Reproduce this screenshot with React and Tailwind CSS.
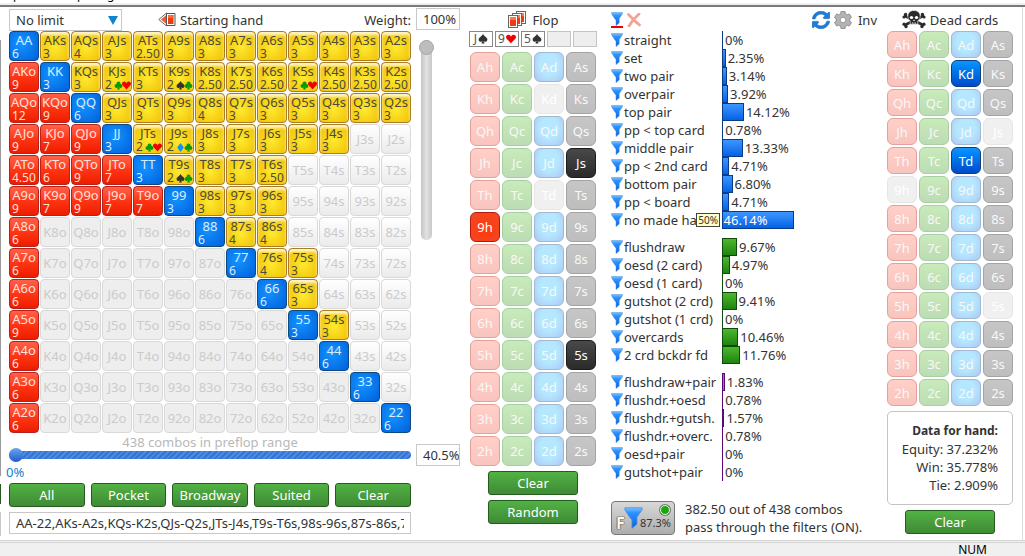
import React, { useState } from "react";
import clsx from "clsx";
import {
  BsSuitClubFill,
  BsSuitDiamondFill,
  BsSuitHeartFill,
  BsSuitSpadeFill,
} from "react-icons/bs";
import { FaCog, FaSyncAlt } from "react-icons/fa";

const RANKS = ["A", "K", "Q", "J", "T", "9", "8", "7", "6", "5", "4", "3", "2"];

// combos per hand, one entry per matrix row; empty cells are outside the range
const COMBOS = [
  "6 3 4 3 2.50 3 3 3 3 3 3 3 3",
  "9 3 3 2ch 3 2sc 2.50 2.50 2.50 2ch 2.50 2.50 2.50",
  "12 9 6 3 3 3 4 3 3 3 3 3 3",
  "9 7 9 3 2ch 2dc 3 3 3 3 3 - -",
  "4.50 6 9 7 3 2sc 3 3 2.50 - - - -",
  "9 7 9 7 7 3 3 3 3 - - - -",
  "6 - - - - - 6 4 4 - - - -",
  "6 - - - - - - 6 4 3 - - -",
  "6 - - - - - - - 6 3 - - -",
  "9 - - - - - - - - 3 3 - -",
  "6 - - - - - - - - - 6 - -",
  "6 - - - - - - - - - - 6 -",
  "6 - - - - - - - - - - - 6",
].map((row) => row.split(" "));

const SUITS = {
  s: { Icon: BsSuitSpadeFill, color: "text-[#333333]" },
  h: { Icon: BsSuitHeartFill, color: "text-[#f00000]" },
  c: { Icon: BsSuitClubFill, color: "text-[#0a9a0a]" },
  d: { Icon: BsSuitDiamondFill, color: "text-[#1590f5]" },
};

const STATS = [
  {
    bar: "border-[#0b3a86] bg-linear-to-b from-[#3b96ff] to-[#0062e6]",
    rows: [
      ["straight", "0"],
      ["set", "2.35"],
      ["two pair", "3.14"],
      ["overpair", "3.92"],
      ["top pair", "14.12"],
      ["pp < top card", "0.78"],
      ["middle pair", "13.33"],
      ["pp < 2nd card", "4.71"],
      ["bottom pair", "6.80"],
      ["pp < board", "4.71"],
      ["no made hand", "46.14"],
    ],
  },
  {
    bar: "border-[#0f4a0f] bg-linear-to-b from-[#4db82c] to-[#1d8410]",
    rows: [
      ["flushdraw", "9.67"],
      ["oesd (2 card)", "4.97"],
      ["oesd (1 card)", "0"],
      ["gutshot (2 crd)", "9.41"],
      ["gutshot (1 crd)", "0"],
      ["overcards", "10.46"],
      ["2 crd bckdr fd", "11.76"],
    ],
  },
  {
    bar: "border-[#5a0a78] bg-[#c05ad0]",
    rows: [
      ["flushdraw+pair", "1.83"],
      ["flushdr.+oesd", "0.78"],
      ["flushdr.+gutsh.", "1.57"],
      ["flushdr.+overc.", "0.78"],
      ["oesd+pair", "0"],
      ["gutshot+pair", "0"],
    ],
  },
];

const CARD_FADED = {
  h: "border-[#e5a09c] bg-linear-to-b from-[#ffd0c8] to-[#f8c4be]",
  c: "border-[#a8cfa2] bg-linear-to-b from-[#c9eab9] to-[#bcdcb4]",
  d: "border-[#9fb9d3] bg-radial-[at_50%_40%] from-[#b5e8ff] from-45% to-[#adc6f2]",
  s: "border-[#a3a3a3] bg-linear-to-b from-[#c6c6c6] to-[#bebebe]",
};

const CARD_ACTIVE = {
  h: "border-[#b31a0c] bg-radial-[at_50%_60%] from-[#ff3a0c] to-[#f04a28]",
  c: "border-[#14601a] bg-[#2c9a30]",
  d: "border-[#0b3f7c] bg-linear-to-b from-[#0d96ff] to-[#0049cc]",
  s: "border-[#1c1c1c] bg-linear-to-b from-[#494949] to-[#2b2b2b]",
};

function Funnel({ className }) {
  return (
    <svg viewBox="0 0 12 14" className={className} aria-hidden="true">
      <defs>
        <linearGradient id="funnelFill" x1="0" y1="0" x2="0" y2="1">
          <stop offset="0" stopColor="#7cc0ff" />
          <stop offset="0.25" stopColor="#2a92ff" />
          <stop offset="1" stopColor="#0a62e6" />
        </linearGradient>
      </defs>
      <path
        d="M.5.5h11v1.200L8.200 6.600V11L5 13.600V8.200L3.600 6.600.5 1.700z"
        fill="url(#funnelFill)"
        stroke="#4a8fd8"
        strokeWidth="0.500"
      />
    </svg>
  );
}

function HandIcon() {
  return (
    <svg viewBox="0 0 18 16" className="h-4 w-[18px]" aria-hidden="true">
      <path d="M8.500 1 .8 7.500 8.500 14z" fill="#fff" stroke="#666" />
      <path d="M8 3.200 3 7.500l5 4.300z" fill="#f25a2c" />
      <path d="M8.500 1.500h8.500v12H8.500z" fill="#fff" stroke="#555" />
      <path d="M10 3h5.500v9H10z" fill="#ee3b12" />
      <path d="M10 3h5.500v3H10z" fill="#ff6a34" />
    </svg>
  );
}

function FlopIcon() {
  return (
    <svg viewBox="0 0 19 17" className="h-[17px] w-[19px]" aria-hidden="true">
      {[
        [8.5, 0.5],
        [4.5, 2.5],
        [0.5, 4.5],
      ].map(([x, y]) => (
        <g key={x}>
          <rect x={x} y={y} width="9" height="12" fill="#fff" stroke="#666" />
          <rect x={x + 1.5} y={y + 1.5} width="6" height="9" fill="#ee3b12" />
          <rect x={x + 1.5} y={y + 1.5} width="6" height="3" fill="#ff7a3c" />
        </g>
      ))}
    </svg>
  );
}

function SkullIcon() {
  return (
    <svg viewBox="0 0 24 19" className="h-[19px] w-6" aria-hidden="true">
      <g stroke="#2b2b2b" strokeWidth="2.600" strokeLinecap="round">
        <path d="M3 6l18 9M21 6 3 15" />
      </g>
      <g fill="#2b2b2b">
        <circle cx="3.600" cy="4.500" r="1.700" />
        <circle cx="2" cy="7" r="1.600" />
        <circle cx="20.400" cy="4.500" r="1.700" />
        <circle cx="22" cy="7" r="1.600" />
        <circle cx="2" cy="14.200" r="1.600" />
        <circle cx="4" cy="16.500" r="1.700" />
        <circle cx="22" cy="14.200" r="1.600" />
        <circle cx="20" cy="16.500" r="1.700" />
      </g>
      <path
        d="M12 .5c4 0 6.200 2.400 6.200 5.700 0 2.200-.7 3.600-2.400 4.600v3.400H8.200v-3.400C6.500 9.800 5.800 8.400 5.800 6.200 5.800 2.900 8 .5 12 .5z"
        fill="#2b2b2b"
        stroke="#fff"
        strokeWidth="0.600"
      />
      <ellipse cx="9.500" cy="7.400" rx="1.700" ry="1.500" fill="#fff" />
      <ellipse cx="14.500" cy="7.400" rx="1.700" ry="1.500" fill="#fff" />
      <path d="M12 9.200l-.9 1.800h1.800z" fill="#fff" />
      <path d="M10.500 12.200v2M12 12.200v2M13.500 12.200v2" stroke="#fff" strokeWidth="0.500" />
    </svg>
  );
}

function GreenButton({ children, className }) {
  return (
    <button
      type="button"
      className={clsx(
        "h-6 rounded-[3px] border border-[#245c1e] bg-linear-to-b from-[#52b243] to-[#3f8a36] text-[13px] leading-5 text-white",
        className
      )}
    >
      {children}
    </button>
  );
}

function HandCell({ row, col }) {
  const high = RANKS[Math.min(row, col)];
  const low = RANKS[Math.max(row, col)];
  const suited = col > row;
  const pair = col === row;
  const name = high + low + (pair ? "" : suited ? "s" : "o");
  const value = COMBOS[row][col];

  if (value === "-") {
    return (
      <button
        type="button"
        className={clsx(
          "size-[30px] rounded-[4px] border border-[#d9d9d9] text-[13px] text-[#cbcbcb]",
          suited ? "bg-linear-to-b from-white to-[#ebebeb]" : "bg-[#eeeeee]"
        )}
      >
        {name}
      </button>
    );
  }

  const count = value.replace(/[a-z]/g, "");
  const suits = value.replace(/[^a-z]/g, "").split("");

  return (
    <button
      type="button"
      className={clsx(
        "flex size-[30px] flex-col rounded-[4px] border whitespace-nowrap",
        pair &&
          "border-[#0b4a80] bg-radial-[at_40%_40%] from-[#1494ff] to-[#0060dc] text-[#dcecff]",
        suited &&
          "border-[#ab7c26] bg-radial-[at_50%_55%] from-[#ffea30] to-[#eebc00] text-[#4d4a3c] shadow-[inset_0_3px_3px_#fff6c8]",
        !pair &&
          !suited &&
          "border-[#b5221a] bg-linear-to-b from-[#ff6048] via-[#ff3412] to-[#ec1c00] text-[#ffe0d8]"
      )}
    >
      <span className="w-full text-center text-[13px] leading-4">{name}</span>
      <span className="flex items-center pl-0.5 text-xs leading-3">
        {count}
        {suits.length > 0 && (
          <span className="ml-0.5 flex">
            {suits.map((s) => {
              const { Icon, color } = SUITS[s];
              return <Icon key={s} className={clsx("-mr-px size-[9px]", color)} />;
            })}
          </span>
        )}
      </span>
    </button>
  );
}

function CardGrid({ active, blocked, tall }) {
  return (
    <div className="grid grid-cols-[repeat(4,30px)] gap-0.5">
      {RANKS.map((rank) =>
        ["h", "c", "d", "s"].map((suit) => {
          const card = rank + suit;
          return (
            <button
              key={card}
              type="button"
              className={clsx(
                "rounded-[6px] border text-[13px]",
                tall ? "h-[30px]" : "h-[27px]",
                active.includes(card)
                  ? [CARD_ACTIVE[suit], "text-white"]
                  : blocked.includes(card)
                    ? "border-[#e6e6e6] bg-[#f0f0f0] text-white"
                    : [CARD_FADED[suit], "text-[#f8f8f8]"]
              )}
            >
              {card}
            </button>
          );
        })
      )}
    </div>
  );
}

function StatRow({ name, value, bar }) {
  const large = Number(value) > 40;
  return (
    <li className="flex h-[18px] items-center">
      <Funnel className="h-3.5 w-3 shrink-0" />
      <span className="flex w-[99px] shrink-0 items-center pr-0.5 pl-px">
        <span className={clsx("flex-1 whitespace-nowrap", large && "overflow-hidden")}>
          {name}
        </span>
        {large && (
          <span className="shrink-0 border border-[#444] bg-[#ffffc8] px-px text-[10px] leading-3">
            50%
          </span>
        )}
      </span>
      <span className="flex h-[18px] w-[155px] items-center">
        <span
          className={clsx(
            "h-[18px] min-w-px shrink-0 border",
            bar,
            Number(value) < 1 && "border-r-0"
          )}
          style={{ width: `${value}%` }}
        />
        <span className={large ? "-ml-[70px] text-white" : "pl-0.5"}>{value}%</span>
      </span>
    </li>
  );
}

function StartingHands() {
  const [limit, setLimit] = useState("No limit");
  const [weight, setWeight] = useState(100);
  const [range, setRange] = useState(0);

  return (
    <section className="flex shrink-0 gap-[5px]">
      <div className="flex w-[402px] flex-col">
        <div className="flex h-[23px] items-center">
          <div className="relative">
            <select
              aria-label="Limit"
              value={limit}
              onChange={(e) => setLimit(e.target.value)}
              className="block h-[22px] w-[113px] appearance-none border border-[#c8c8c8] bg-white pl-1.5 text-[13px] leading-5"
            >
              <option>No limit</option>
              <option>Fixed limit</option>
            </select>
            <svg
              viewBox="0 0 10 9"
              className="pointer-events-none absolute top-[7px] right-1 h-[9px] w-2.5"
              aria-hidden="true"
            >
              <path d="M0 0h10L5 9z" fill="#0e84cc" />
            </svg>
          </div>
          <h2 className="ml-9 flex items-center gap-1">
            <HandIcon />
            Starting hand
          </h2>
          <label htmlFor="weight" className="ml-auto">
            Weight:
          </label>
        </div>
        <div className="grid grid-cols-[repeat(13,30px)] gap-px">
          {RANKS.map((_, row) =>
            RANKS.map((_, col) => <HandCell key={`${row}-${col}`} row={row} col={col} />)
          )}
        </div>
        <label htmlFor="range" className="text-center leading-[18px] text-[#b8b8b8]">
          438 combos in preflop range
        </label>
        <input
          id="range"
          type="range"
          value={range}
          onChange={(e) => setRange(e.target.value)}
          className="h-2 w-full appearance-none rounded-full bg-[repeating-linear-gradient(135deg,#4a8ae0_0_2px,#3574d4_2px_4px)] [&::-webkit-slider-thumb]:size-[14px] [&::-webkit-slider-thumb]:appearance-none [&::-webkit-slider-thumb]:rounded-full [&::-webkit-slider-thumb]:bg-linear-to-b [&::-webkit-slider-thumb]:from-[#6ba4ee] [&::-webkit-slider-thumb]:to-[#1c5cc8]"
        />
        <output htmlFor="range" className="-ml-[3px] pt-1 leading-[18px] text-[#0e84cc]">
          0%
        </output>
        <div className="mt-0.5 grid grid-cols-5 gap-1.5">
          <GreenButton>All</GreenButton>
          <GreenButton>Pocket</GreenButton>
          <GreenButton>Broadway</GreenButton>
          <GreenButton>Suited</GreenButton>
          <GreenButton>Clear</GreenButton>
        </div>
        <input
          type="text"
          aria-label="Range"
          defaultValue="AA-22,AKs-A2s,KQs-K2s,QJs-Q2s,JTs-J4s,T9s-T6s,98s-96s,87s-86s,76s-75s,65s,54s"
          className="mt-[5px] h-[22px] w-full border border-[#c8c8c8] px-1.5 text-[13px]"
        />
      </div>
      <div className="flex w-11 flex-col items-center">
        <input
          id="weight"
          type="text"
          value={`${weight}%`}
          readOnly
          className="h-[22px] w-full border border-[#c8c8c8] pl-1.5 text-[13px]"
        />
        <input
          type="range"
          aria-label="Weight"
          value={weight}
          onChange={(e) => setWeight(e.target.value)}
          className="mt-2.5 mr-6 h-[200px] w-[11px] appearance-none rounded-full bg-linear-to-r from-[#c4c4c4] via-[#e2e2e2] to-[#c8c8c8] [direction:rtl] [writing-mode:vertical-lr] [&::-webkit-slider-thumb]:size-[15px] [&::-webkit-slider-thumb]:appearance-none [&::-webkit-slider-thumb]:rounded-full [&::-webkit-slider-thumb]:border [&::-webkit-slider-thumb]:border-[#a4a4a4] [&::-webkit-slider-thumb]:bg-[#bdbdbd]"
        />
        <input
          type="text"
          aria-label="Range percentage"
          defaultValue="40.5%"
          className="mt-[204px] h-[22px] w-full border border-[#c8c8c8] pl-1.5 text-[13px]"
        />
      </div>
    </section>
  );
}

function Flop() {
  return (
    <section className="flex w-32 shrink-0 flex-col items-center">
      <h2 className="flex h-[23px] items-center gap-1.5">
        <FlopIcon />
        Flop
      </h2>
      <div className="flex gap-0.5">
        {["Js", "9h", "5s", "", ""].map((card, i) => {
          const suit = SUITS[card[1]];
          return (
            <div
              key={i}
              className={clsx(
                "flex h-4 w-6 items-center justify-center border text-xs text-[#555]",
                card ? "border-[#8a8a8a] bg-white" : "border-[#c4c4c4] bg-[#eeeeee]"
              )}
            >
              {card[0]}
              {suit && <suit.Icon className={clsx("ml-px size-2.5", suit.color)} />}
            </div>
          );
        })}
      </div>
      <div className="mt-[5px]">
        <CardGrid tall active={["Js", "9h", "5s"]} blocked={["Kd", "Td"]} />
      </div>
      <GreenButton className="mt-[5px] w-[90px]">Clear</GreenButton>
      <GreenButton className="mt-[5px] w-[90px]">Random</GreenButton>
    </section>
  );
}

function Filters() {
  return (
    <section className="flex min-w-[266px] flex-1 flex-col">
      <div className="flex h-[23px] items-center pr-2.5">
        <button type="button" aria-label="Filter" className="border-b-2 border-[#f00000]">
          <Funnel className="h-3.5 w-3" />
        </button>
        <button type="button" aria-label="Remove filters" className="ml-1">
          <svg viewBox="0 0 14 14" className="size-3.5" aria-hidden="true">
            <path
              d="M1.500 1.500c3 3 6.500 7 11 10.500M12 1C8 4.500 4.500 8.500 2 13"
              stroke="#f5a294"
              strokeWidth="2.800"
              strokeLinecap="round"
              fill="none"
            />
          </svg>
        </button>
        <button type="button" aria-label="Refresh" className="ml-auto">
          <FaSyncAlt className="size-[18px] stroke-[#0d4d9c] stroke-[16px] text-[#1a80e0]" />
        </button>
        <button type="button" aria-label="Settings" className="ml-1">
          <FaCog className="size-[18px] stroke-[#777] stroke-[20px] text-[#b4b4b4]" />
        </button>
        <button type="button" className="ml-1.5">
          Inv
        </button>
      </div>
      <div className="flex flex-col gap-[9px]">
        {STATS.map((group) => (
          <ul key={group.bar}>
            {group.rows.map(([name, value]) => (
              <StatRow key={name} name={name} value={value} bar={group.bar} />
            ))}
          </ul>
        ))}
      </div>
      <div className="mt-[19px] flex items-center gap-2.5">
        <button
          type="button"
          className="relative h-[34px] w-16 shrink-0 rounded-[4px] border border-[#777] bg-linear-to-b from-[#d8d8d8] to-[#adadad]"
        >
          <span className="absolute bottom-0 left-1 text-base leading-[22px] font-bold text-[#fffbe6] [text-shadow:0_0_1px_#333,0_0_1px_#333,0_0_1px_#333]">
            F
          </span>
          <Funnel className="absolute top-[5px] left-3 h-[22px] w-[19px]" />
          <span className="absolute top-[3px] right-1 size-2.5 rounded-full border border-[#d8ffd0] bg-[#1ca80c] ring-1 ring-[#777]" />
          <span className="absolute right-[3px] bottom-1 text-[11px] leading-[14px]">87.3%</span>
        </button>
        <p className="leading-[18px] whitespace-nowrap">
          382.50 out of 438 combos
          <br />
          pass through the filters (ON).
        </p>
      </div>
    </section>
  );
}

function DeadCards() {
  return (
    <section className="flex w-[126px] shrink-0 flex-col items-center">
      <h2 className="flex h-[23px] items-center gap-1">
        <SkullIcon />
        Dead cards
      </h2>
      <CardGrid active={["Kd", "Td"]} blocked={["Js", "9h", "5s"]} />
      <dl className="mt-[5px] flex h-[94px] w-full flex-col items-end justify-center rounded-[5px] border border-[#c4c4c4] pr-3.5 leading-[18px]">
        <dt className="text-xs leading-[18px] font-bold">Data for hand:</dt>
        <dd>Equity: 37.232%</dd>
        <dd>Win: 35.778%</dd>
        <dd>Tie: 2.909%</dd>
      </dl>
      <GreenButton className="mt-[5px] w-[90px]">Clear</GreenButton>
    </section>
  );
}

export default function App() {
  return (
    <div className="flex min-h-screen min-w-max flex-col bg-white font-['Noto_Sans',sans-serif] text-[13px] leading-[18px] text-[#333]">
      {/* tail of the caption row that is scrolled out above the panel */}
      <div
        className="flex h-[3px] items-end overflow-hidden pl-[13px] text-xs leading-4 text-black"
        aria-hidden="true"
      >
        <span className="w-16">p</span>
        <span className="w-[30px]">p</span>
        <span>g</span>
      </div>
      <div className="h-1 border-b-2 border-[#7a7a7a] bg-[#f0f0f0]" />
      <main className="mr-0.5 flex border-r border-[#dcdcdc] pt-px pb-1">
        <div className="mr-2 flex w-px flex-col gap-2 pt-8" aria-hidden="true">
          <div className="flex-1 bg-[#9a9a9a]" />
          <div className="h-5 bg-[#245c1e]" />
          <div className="h-6 bg-[#c8c8c8]" />
        </div>
        <div className="flex flex-1 pr-[9px]">
          <StartingHands />
          <div className="ml-[9px] flex flex-1">
            <Flop />
            <div className="ml-3.5 flex flex-1">
              <Filters />
              <DeadCards />
            </div>
          </div>
        </div>
      </main>
      <footer className="flex flex-1 justify-end border-t-3 border-double border-[#d4d4d4] bg-[#f0f0f0] pr-[38px] text-xs leading-[14px]">
        <span className="text-black">NUM</span>
      </footer>
    </div>
  );
}
